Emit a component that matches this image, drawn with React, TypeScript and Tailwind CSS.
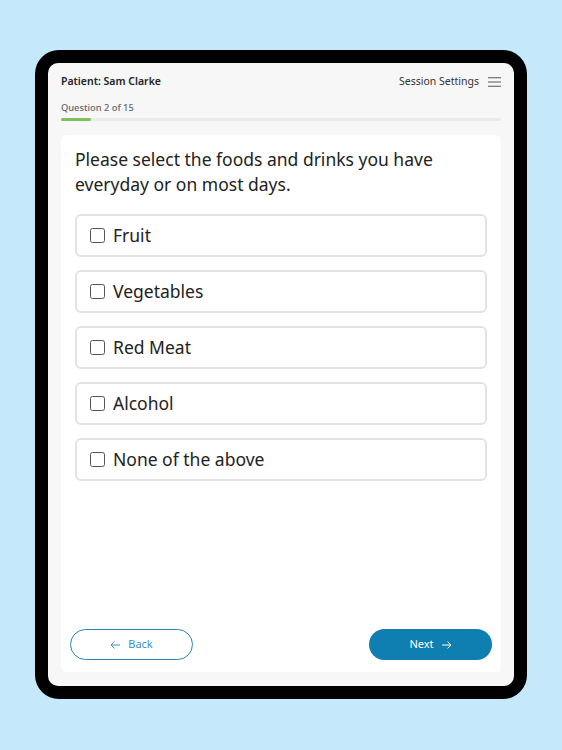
import { useState } from "react";

/** Questionnaire screen shown inside a tablet frame. */
const options = ["Fruit", "Vegetables", "Red Meat", "Alcohol", "None of the above"];

const font = { fontFamily: '"Noto Sans", "Open Sans", Arial, sans-serif' };

const Arrow = ({ left }: { left?: boolean }) => (
  <svg width="10" height="8" viewBox="0 0 10 8" className={left ? "rotate-180" : ""}>
    <path d="M0 4h9M5.5 0.6L9 4 5.5 7.4" stroke="currentColor" strokeWidth="1" fill="none" />
  </svg>
);

export default function App() {
  const [picked, setPicked] = useState<string[]>([]);
  const toggle = (o: string) =>
    setPicked((p) => (p.includes(o) ? p.filter((x) => x !== o) : [...p, o]));

  return (
    <div className="flex h-[750px] w-[562px] items-start justify-center bg-[#c5e9fb] pt-[50px]" style={font}>
      <div className="h-[649px] w-[492px] rounded-[24px] bg-black p-[13px]">
        <div className="flex h-full flex-col rounded-[10px] bg-[#f7f7f7] px-[13px] pb-[14px]">
          {/* header */}
          <div className="flex h-[27px] items-end justify-between">
            <span className="text-[10.5px] font-semibold text-[#222]">Patient: Sam Clarke</span>
            <div className="flex items-center gap-[9px]">
              <span className="text-[10.5px] text-[#333]">Session Settings</span>
              <svg width="13" height="10" viewBox="0 0 13 10" className="text-[#555]">
                <path d="M0 0.75h13M0 5h13M0 9.25h13" stroke="currentColor" strokeWidth="1" />
              </svg>
            </div>
          </div>

          <div className="mt-[12px] text-[9.3px] font-medium leading-[12px] text-[#666]">Question 2 of 15</div>
          <div className="mt-[4px] h-[3px] w-full rounded-full bg-[#ebebeb]">
            <div className="h-full w-[30px] rounded-full bg-[#7cc25a]" />
          </div>

          {/* card */}
          <div className="mt-[14px] flex flex-1 flex-col rounded-[6px] bg-white px-[14px] pb-[12px]">
            <p className="mt-[12px] text-[17.5px] leading-[25px] text-[#222]">
              Please select the foods and drinks you have everyday or on most days.
            </p>
            <div className="mt-[17px] flex flex-col gap-[13px]">
              {options.map((o) => (
                <button
                  key={o}
                  onClick={() => toggle(o)}
                  className="flex h-[43px] items-center gap-[8px] rounded-[6px] border-2 border-[#e3e3e3] bg-white pl-[13px] text-left"
                >
                  <span className="flex h-[15px] w-[15px] items-center justify-center rounded-[2.5px] border-[1.5px] border-[#555]">
                    {picked.includes(o) && (
                      <svg width="10" height="10" viewBox="0 0 10 10">
                        <path d="M1.5 5l2.5 2.5 4.5-5" stroke="#333" strokeWidth="1.5" fill="none" />
                      </svg>
                    )}
                  </span>
                  <span className="text-[17.5px] text-[#222]">{o}</span>
                </button>
              ))}
            </div>

            <div className="-mx-[5px] mt-auto flex justify-between">
              <button className="flex h-[31px] w-[123px] items-center justify-center gap-[8px] rounded-full border border-[#2b86b5] bg-white text-[11px] text-[#3c8fc0]">
                <Arrow left /> Back
              </button>
              <button className="flex h-[31px] w-[123px] items-center justify-center gap-[8px] rounded-full bg-[#0f7eb0] text-[11px] text-white">
                Next <Arrow />
              </button>
            </div>
          </div>
        </div>
      </div>
    </div>
  );
}
